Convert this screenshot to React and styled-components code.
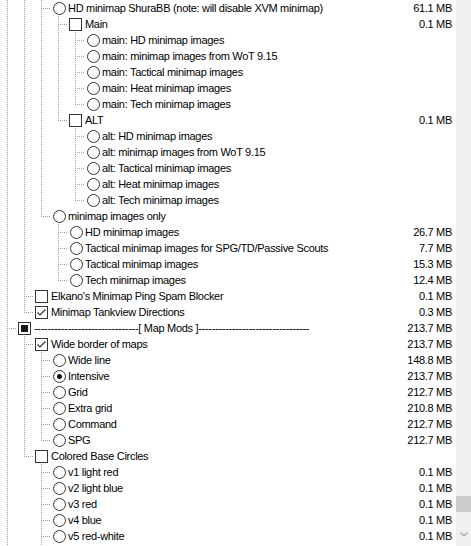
import styled, { createGlobalStyle, css } from "styled-components";

const GlobalStyle = createGlobalStyle`
  html, body {
    margin: 0;
    background: #fff;
    overflow: hidden;
  }
  body {
    font-family: "Liberation Sans", Arial, sans-serif;
    font-size: 11px;
    color: #000;
  }
`;

const DOT = "#a0a0a0";

const Window = styled.div`
  display: flex;
  width: 471px;
  height: 546px;
  overflow: hidden;
`;

const List = styled.div`
  flex: 1;
  min-width: 0;
  background: #fff;
  overflow: hidden;
`;

const Row = styled.div`
  display: flex;
  align-items: center;
  height: 16px;
  line-height: 16px;
  white-space: nowrap;
`;

const Guide = styled.span`
  flex: none;
  width: 17px;
  height: 16px;
  background-repeat: no-repeat;
  ${({ $line }) =>
    $line &&
    css`
      background-image: repeating-linear-gradient(to bottom, ${DOT} 0 1px, transparent 1px 2px);
      background-size: 1px 16px;
      background-position: 7px 0;
    `}
`;

const Connector = styled.span`
  flex: none;
  width: 17px;
  height: 16px;
  background-repeat: no-repeat;
  background-image: repeating-linear-gradient(to bottom, ${DOT} 0 1px, transparent 1px 2px),
    repeating-linear-gradient(to right, ${DOT} 0 1px, transparent 1px 2px);
  background-size: 1px ${({ $last }) => ($last ? "9px" : "16px")}, 8px 1px;
  background-position: 7px 0, 9px 8px;
`;

const Slot = styled.span`
  flex: none;
  width: 17px;
  height: 16px;
  display: flex;
  align-items: center;
`;

const Box = styled.span`
  box-sizing: border-box;
  width: 13px;
  height: 13px;
  margin-left: 1px;
  border: 1px solid #333;
  background: #fff;
  display: flex;
  align-items: center;
  justify-content: center;
`;

const Fill = styled.span`
  width: 7px;
  height: 7px;
  background: #1a1a1a;
`;

const Radio = styled.span`
  box-sizing: border-box;
  width: 13px;
  height: 13px;
  margin-left: 2px;
  border: 1px solid #333;
  border-radius: 50%;
  background: #fff;
  display: flex;
  align-items: center;
  justify-content: center;
`;

const RadioDot = styled.span`
  width: 5px;
  height: 5px;
  border-radius: 50%;
  background: #111;
`;

const Label = styled.span`
  letter-spacing: -0.3px;
`;

const Size = styled.span`
  margin-left: auto;
  padding-right: 4px;
  letter-spacing: -0.3px;
`;

const ScrollBar = styled.div`
  flex: none;
  width: 15px;
  display: flex;
  flex-direction: column;
  background: #f0f0f0;
`;

const Track = styled.div`
  flex: 1;
  padding-top: ${({ $offset }) => $offset}px;
`;

const Thumb = styled.div`
  height: 16px;
  background: #cdcdcd;
`;

const ArrowButton = styled.div`
  height: 16px;
  display: flex;
  justify-content: center;
  padding-top: 2px;
  box-sizing: border-box;
`;

const radios = (prefix, names) =>
  names.map((n) => ({ label: prefix + n, type: "radio" }));

const tree = [
  {
    hidden: true,
    children: [
      {
        hidden: true,
        children: [
          {
            label: "HD minimap ShuraBB (note: will disable XVM minimap)",
            type: "radio",
            size: "61.1 MB",
            children: [
              {
                label: "Main",
                type: "check",
                size: "0.1 MB",
                children: radios("main: ", [
                  "HD minimap images",
                  "minimap images from WoT 9.15",
                  "Tactical minimap images",
                  "Heat minimap images",
                  "Tech minimap images",
                ]),
              },
              {
                label: "ALT",
                type: "check",
                size: "0.1 MB",
                children: radios("alt: ", [
                  "HD minimap images",
                  "minimap images from WoT 9.15",
                  "Tactical minimap images",
                  "Heat minimap images",
                  "Tech minimap images",
                ]),
              },
            ],
          },
          {
            label: "minimap images only",
            type: "radio",
            children: [
              { label: "HD minimap images", type: "radio", size: "26.7 MB" },
              { label: "Tactical minimap images for SPG/TD/Passive Scouts", type: "radio", size: "7.7 MB" },
              { label: "Tactical minimap images", type: "radio", size: "15.3 MB" },
              { label: "Tech minimap images", type: "radio", size: "12.4 MB" },
            ],
          },
        ],
      },
      { label: "Elkano's Minimap Ping Spam Blocker", type: "check", size: "0.1 MB" },
      { label: "Minimap Tankview Directions", type: "check", checked: true, size: "0.3 MB" },
    ],
  },
  {
    label: "-------------------------------[ Map Mods ]---------------------------------",
    type: "check",
    partial: true,
    size: "213.7 MB",
    children: [
      {
        label: "Wide border of maps",
        type: "check",
        checked: true,
        size: "213.7 MB",
        children: [
          { label: "Wide line", type: "radio", size: "148.8 MB" },
          { label: "Intensive", type: "radio", checked: true, size: "213.7 MB" },
          { label: "Grid", type: "radio", size: "212.7 MB" },
          { label: "Extra grid", type: "radio", size: "210.8 MB" },
          { label: "Command", type: "radio", size: "212.7 MB" },
          { label: "SPG", type: "radio", size: "212.7 MB" },
        ],
      },
      {
        label: "Colored Base Circles",
        type: "check",
        children: [
          { label: "v1 light red", type: "radio", size: "0.1 MB" },
          { label: "v2 light blue", type: "radio", size: "0.1 MB" },
          { label: "v3 red", type: "radio", size: "0.1 MB" },
          { label: "v4 blue", type: "radio", size: "0.1 MB" },
          { label: "v5 red-white", type: "radio", size: "0.1 MB" },
          { label: "v6 blue-white", type: "radio", size: "0.1 MB" },
          { label: "v7 white", type: "radio", size: "0.1 MB" },
        ],
      },
    ],
  },
  { hidden: true },
];

function flatten(nodes, depth = 0, trail = [], out = []) {
  nodes.forEach((n, i) => {
    const last = i === nodes.length - 1;
    if (!n.hidden) out.push({ ...n, depth, trail, last });
    if (n.children) flatten(n.children, depth + 1, [...trail, !last], out);
  });
  return out;
}

function CheckMark() {
  return (
    <svg width="11" height="11" viewBox="0 0 11 11">
      <polyline points="1.5,5.5 4,8 9.5,2.5" fill="none" stroke="#333" strokeWidth="1.2" />
    </svg>
  );
}

function Toggle({ item }) {
  if (item.type === "radio") {
    return <Radio>{item.checked && <RadioDot />}</Radio>;
  }
  return (
    <Box>
      {item.partial && <Fill />}
      {item.checked && <CheckMark />}
    </Box>
  );
}

function TreeRow({ item }) {
  return (
    <Row>
      {item.trail.map((cont, i) => (
        <Guide key={i} $line={cont} />
      ))}
      <Connector $last={item.last} />
      <Slot>
        <Toggle item={item} />
      </Slot>
      <Label>{item.label}</Label>
      {item.size && <Size>{item.size}</Size>}
    </Row>
  );
}

export default function App() {
  const rows = flatten(tree);
  return (
    <>
      <GlobalStyle />
      <Window>
        <List>
          {rows.map((r, i) => (
            <TreeRow key={i} item={r} />
          ))}
        </List>
        <ScrollBar>
          <Track $offset={496}>
            <Thumb />
          </Track>
          <ArrowButton>
            <svg width="8" height="5" viewBox="0 0 8 5">
              <polyline points="0.5,0.5 4,4 7.5,0.5" fill="none" stroke="#a0a0a0" strokeWidth="1.2" />
            </svg>
          </ArrowButton>
        </ScrollBar>
      </Window>
    </>
  );
}
